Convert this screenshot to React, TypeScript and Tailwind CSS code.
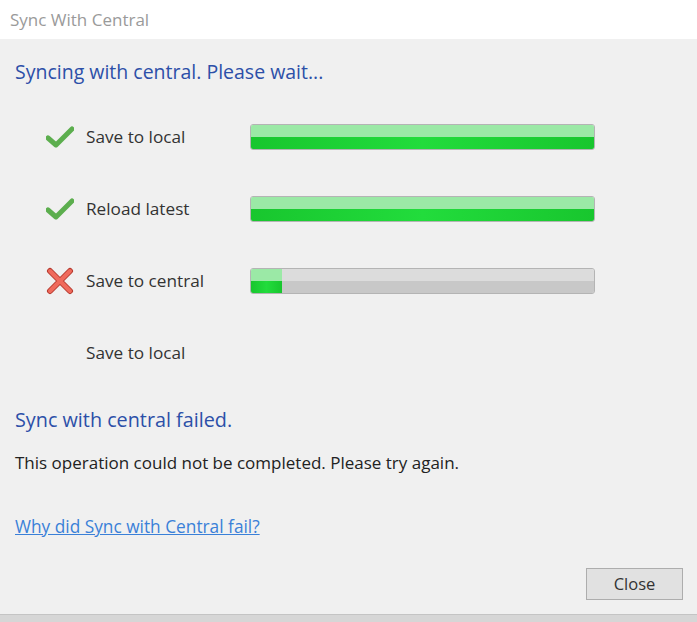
import React from 'react';

type Step = {
  label: string;
  status: 'done' | 'failed' | 'pending';
  progress?: number;
};

const steps: Step[] = [
  { label: 'Save to local', status: 'done', progress: 100 },
  { label: 'Reload latest', status: 'done', progress: 100 },
  { label: 'Save to central', status: 'failed', progress: 9 },
  { label: 'Save to local', status: 'pending' },
];

function CheckIcon() {
  return (
    <svg width="28" height="24" viewBox="0 0 28 24">
      <path
        d="M2 13 L10 20 L26 4"
        fill="none"
        stroke="#5cae4e"
        strokeWidth="5"
        strokeLinecap="round"
        strokeLinejoin="round"
      />
    </svg>
  );
}

function CrossIcon() {
  return (
    <svg width="28" height="28" viewBox="0 0 28 28">
      <path
        d="M4 4 L24 24 M24 4 L4 24"
        fill="none"
        stroke="#b63a2e"
        strokeWidth="6"
        strokeLinecap="round"
      />
      <path
        d="M4 4 L24 24 M24 4 L4 24"
        fill="none"
        stroke="#ef6a5c"
        strokeWidth="4"
        strokeLinecap="round"
      />
    </svg>
  );
}

function ProgressBar({ value }: { value: number }) {
  return (
    <div className="relative w-[345px] h-[26px] rounded-[3px] border border-[#b4b4b4] bg-[#e6e6e6] overflow-hidden">
      <div className="flex flex-col h-full">
        <div className="h-1/2 bg-[#dcdcdc]" />
        <div className="h-1/2 bg-[#c8c8c8]" />
      </div>
      <div className="absolute left-0 top-0 h-full flex flex-col" style={{ width: `${value}%` }}>
        <div className="h-1/2 bg-[#9be9a6]" />
        <div className="h-1/2 bg-gradient-to-r from-[#18c62e] via-[#22dc3c] to-[#18c62e]" />
      </div>
    </div>
  );
}

export default function App() {
  return (
    <div
      className="w-[697px] h-[622px] bg-[#d6d6d6] flex flex-col text-[#262626]"
      style={{ fontFamily: '"Open Sans", "Noto Sans", sans-serif' }}
    >
      <div className="h-[39px] bg-white flex items-center pl-[10px] text-[17px] text-[#9a9a9a]">
        Sync With Central
      </div>
      <div className="h-[576px] bg-[#f0f0f0] border-b border-[#c4c4c4] flex flex-col">
        <div className="pl-[15px] pt-[19px] text-[19.5px] text-[#2c4fa8] leading-[28px]">
          Syncing with central. Please wait...
        </div>
        <div className="mt-[38px] flex flex-col gap-[46px]">
          {steps.map((s, i) => (
            <div key={i} className="flex items-center h-[26px]">
              <div className="w-[86px] flex justify-end pr-[12px]">
                {s.status === 'done' && <CheckIcon />}
                {s.status === 'failed' && <CrossIcon />}
              </div>
              <div className="w-[164px] text-[17.2px] text-[#333]">{s.label}</div>
              {s.progress !== undefined && <ProgressBar value={s.progress} />}
            </div>
          ))}
        </div>
        <div className="pl-[15px] mt-[40px] text-[19.8px] text-[#2c4fa8] leading-[28px]">
          Sync with central failed.
        </div>
        <div className="pl-[15px] mt-[18px] text-[17px] text-[#222] leading-[22px]">
          This operation could not be completed. Please try again.
        </div>
        <div className="pl-[15px] mt-[42px] text-[17.3px] leading-[22px]">
          <a href="#" className="text-[#3a80d8] underline">
            Why did Sync with Central fail?
          </a>
        </div>
        <div className="mt-[30px] flex justify-end pr-[14px]">
          <button className="w-[97px] h-[32px] border border-[#adadad] bg-[#e1e1e1] text-[16.5px] text-[#333]">
            Close
          </button>
        </div>
      </div>
    </div>
  );
}
